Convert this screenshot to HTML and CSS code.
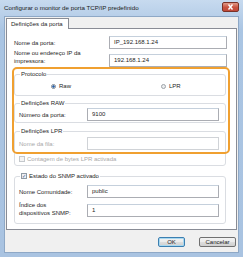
FILE: index.html
```html
<!DOCTYPE html>
<html lang="pt">
  <head>
    <meta charset="UTF-8" />
    <title>Configurar o monitor de porta TCP/IP predefinido</title>
    <link rel="stylesheet" href="styles.css">
  </head>
  <body>
    <div class="window">
      <div class="titlebar">
        <span class="title">Configurar o monitor de porta TCP/IP predefinido</span>
        <span class="close">
          <svg width="9" height="6" viewBox="0 0 9 6"><path d="M2.5 0.5 L6.5 5.5 M6.5 0.5 L2.5 5.5" stroke="#fff" stroke-width="1.4"/></svg>
        </span>
      </div>

      <div class="client">
        <div class="tabs">
          <div class="tab">Definições da porta</div>
        </div>

        <div class="panel">
          <div class="row">
            <span class="label">Nome da porta:</span>
            <div class="field">IP_192.168.1.24</div>
          </div>
          <div class="row tall">
            <span class="label">Nome ou endereço IP da<br>impressora:</span>
            <div class="field">192.168.1.24</div>
          </div>

          <fieldset class="group proto">
            <legend>Protocolo</legend>
            <div class="radios">
              <span class="opt"><span class="radio on"></span>Raw</span>
              <span class="opt"><span class="radio"></span>LPR</span>
            </div>
          </fieldset>

          <fieldset class="group raw">
            <legend>Definições RAW</legend>
            <div class="row inner">
              <span class="label">Número da porta:</span>
              <div class="field">9100</div>
            </div>
          </fieldset>

          <fieldset class="group lpr">
            <legend>Definições LPR</legend>
            <div class="row inner disabled">
              <span class="label">Nome da fila:</span>
              <div class="field"></div>
            </div>
            <div class="check-row disabled">
              <span class="checkbox"></span>Contagem de bytes LPR activada
            </div>
          </fieldset>

          <fieldset class="group snmp">
            <legend><span class="checkbox checked">&#10003;</span>Estado do SNMP activado</legend>
            <div class="row inner">
              <span class="label">Nome Comunidade:</span>
              <div class="field">public</div>
            </div>
            <div class="row inner tall">
              <span class="label">Índice dos<br>dispositivos SNMP:</span>
              <div class="field">1</div>
            </div>
          </fieldset>

          <div class="highlight"></div>
        </div>

        <div class="actions">
          <button class="btn default">OK</button>
          <button class="btn">Cancelar</button>
        </div>
      </div>
    </div>
  </body>
</html>
```

FILE: styles.css
```css
body {
  margin: 0;
  font-family: "Liberation Sans", Arial, sans-serif;
  font-size: 6px;
  line-height: 8px;
  color: #1e1e1e;
}

.window {
  width: 243px;
  height: 257px;
  box-sizing: border-box;
  display: flex;
  flex-direction: column;
  padding: 0 4px 4px 4px;
  background: linear-gradient(#c7daef, #aac5e3 30px, #a9c3e1);
}

.titlebar {
  height: 16px;
  display: flex;
  align-items: center;
  justify-content: space-between;
}

.title {
  font-size: 6.2px;
  color: #1a1a1a;
}

.close {
  width: 15px;
  height: 8px;
  margin-bottom: 3px;
  border: 1px solid #7a3228;
  border-radius: 2px;
  background: linear-gradient(#e29a88, #c8523f 55%, #c0493a);
  display: flex;
  align-items: center;
  justify-content: center;
}

.client {
  flex: 1;
  background: #f0f0f0;
  border: 1px solid #8ea8c6;
  padding: 1px 1px 0 1px;
  display: flex;
  flex-direction: column;
}

.tabs {
  display: flex;
  height: 10px;
  position: relative;
  z-index: 1;
}

.tab {
  background: #fff;
  border: 1px solid #898c95;
  border-bottom: none;
  padding: 0 5px 0 4px;
  line-height: 10px;
  height: 10px;
}

.panel {
  position: relative;
  height: 202px;
  box-sizing: border-box;
  background: #fff;
  border: 1px solid #898c95;
  padding: 7px 8px 0 7px;
}

.row {
  display: flex;
  align-items: center;
  height: 13px;
}

.row.tall {
  height: 18px;
  align-items: flex-end;
}

.row .label {
  width: 95px;
  flex: none;
}

.row.tall .label {
  align-self: flex-start;
}

.field {
  width: 118px;
  height: 13px;
  box-sizing: border-box;
  border: 1px solid #abadb3;
  border-top-color: #c5d0dc;
  line-height: 11px;
  padding-left: 4px;
}

.group {
  margin: 3px 0 0 0;
  width: 212px;
  box-sizing: border-box;
  border: 1px solid #dadde2;
  border-radius: 3px;
  padding: 0 6px 0 4px;
}

.group legend {
  padding: 0 1px;
  margin-left: 1px;
  line-height: 8px;
  display: flex;
  align-items: center;
}

.proto {
  margin-top: 3px;
  padding-top: 4px;
  padding-bottom: 7px;
}

.radios {
  display: grid;
  grid-template-columns: 110px auto;
  padding-left: 32px;
  height: 6px;
  align-items: center;
}

.opt {
  display: flex;
  align-items: center;
}

.radio {
  width: 5px;
  height: 5px;
  box-sizing: border-box;
  border: 1px solid #9da3a9;
  border-radius: 50%;
  background: #eceef0;
  margin-right: 3px;
}

.radio.on {
  background: radial-gradient(circle, #2860a8 45%, #dfe6ee 55%);
  border-color: #7f8a95;
}

.raw {
  padding-top: 1px;
  padding-bottom: 1px;
}

.row.inner .label {
  width: 68px;
}

.row.inner .field {
  width: 132px;
}

.lpr {
  margin-top: 4px;
  padding-top: 2px;
  padding-bottom: 2px;
}

.disabled {
  color: #a8a8a8;
}

.disabled .field {
  border-color: #d0d3d7;
}

.check-row {
  display: flex;
  align-items: center;
  margin-top: 5px;
  height: 8px;
}

.checkbox {
  width: 6px;
  height: 6px;
  box-sizing: border-box;
  border: 1px solid #c4c8cc;
  background: #f4f4f4;
  margin-right: 2px;
  font-size: 5px;
  line-height: 4px;
  text-align: center;
  color: #2f4f86;
}

.checkbox.checked {
  border-color: #8f9aa5;
  background: #eef1f4;
}

.snmp {
  margin-top: 6px;
  padding-top: 5px;
  padding-bottom: 6px;
}

.snmp .row.tall {
  height: 16px;
  margin-top: 3px;
}

.highlight {
  position: absolute;
  left: 5px;
  top: 38px;
  width: 218px;
  height: 87px;
  box-sizing: border-box;
  border: 2px solid #f0a030;
  border-radius: 5px;
}

.actions {
  display: flex;
  justify-content: flex-end;
  gap: 14px;
  padding: 7px 1px 0 0;
}

.btn {
  font-family: inherit;
  font-size: 6px;
  height: 10px;
  line-height: 8px;
  padding: 0;
  border: 1px solid #707070;
  border-radius: 2px;
  background: linear-gradient(#f2f2f2, #ebebeb 50%, #dddddd 51%, #cfcfcf);
  color: #1e1e1e;
  width: 37px;
}

.btn.default {
  width: 27px;
  border-color: #3c7fb1;
  box-shadow: inset 0 0 0 1px #a8d8f0;
}
```
